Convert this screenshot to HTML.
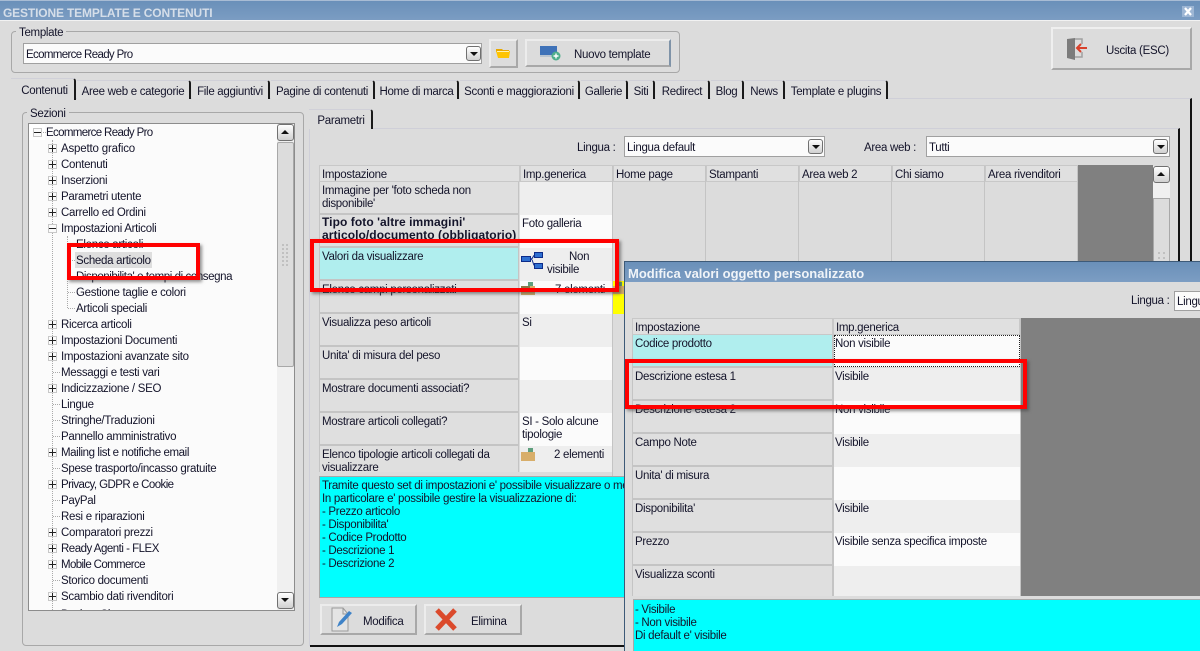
<!DOCTYPE html>
<html><head><meta charset="utf-8">
<style>
html,body{margin:0;padding:0}
body{width:1200px;height:651px;overflow:hidden;position:relative;background:#dcdcdc;font:11.5px/14px "Liberation Sans",sans-serif;color:#14142a;letter-spacing:-.3px}
div,svg,span.t{position:absolute}
.t{white-space:nowrap;line-height:16px}
.b{box-sizing:border-box}
.tab{box-sizing:border-box;top:80px;height:19px;background:#dedede;border-top:1px solid #d0d0d8;border-right:2px solid #1a1a1a;text-align:center;line-height:22px;white-space:nowrap;border-top-right-radius:3px}
.cb{box-sizing:border-box;background:#fbfbfb;border:1px solid #a0a0a0;padding-left:2px;line-height:23px}
.arr{box-sizing:border-box;width:15px;height:15px;border:1px solid #707070;border-radius:3px;background:linear-gradient(#fff,#d0d0d0)}
.arr:after{content:"";position:absolute;left:3px;top:5px;border-left:4px solid transparent;border-right:4px solid transparent;border-top:4px solid #111}
.up:after{border-top:0;border-bottom:4px solid #111}
.btn{box-sizing:border-box;background:#dcdcdc;border:2px solid;border-color:#ececec #a8a8a8 #a8a8a8 #ececec}
.ex{box-sizing:border-box;left:48px;width:9px;height:9px;background:#fbfbfb;border:1px solid #c8c8c8}
.ex:before{content:"";position:absolute;left:0;top:3px;width:7px;height:1px;background:#222}
.ex:after{content:"";position:absolute;left:3px;top:0;width:1px;height:7px;background:#222}
.mi:after{display:none}
.hd{background:#e0e0e0;border:1px solid #c8c8c8;box-sizing:border-box;padding-left:2px;line-height:19px;height:17px;top:165px}
.c1{left:319px;width:200px;background:#dfdfdf;box-sizing:border-box;border:1px solid #c4c4c4;border-width:0 1px 2px 1px;padding:3px 2px 0;line-height:13px;overflow:hidden}
.c2{left:520px;width:92px;box-sizing:border-box;padding:3px 2px 0;line-height:13px;overflow:hidden}
.vl{top:166px;width:1px;height:95px;background:#c4c4c4}
.red{box-sizing:border-box;border:4px solid #f00;box-shadow:2px 2px 3px rgba(60,60,60,.55)}
.p1{left:633px;width:199px;background:#dfdfdf;box-sizing:border-box;border-bottom:2px solid #c4c4c4;padding:3px 2px 0;line-height:13px;height:33px}
.p2{left:834px;width:186px;box-sizing:border-box;padding:3px 1px 0;line-height:13px;height:33px}
</style></head><body>

<!-- title bar -->
<div style="left:0;top:0;width:1200px;height:21px;background:linear-gradient(#6a90b9,#7c9dc3);border-top:1px solid #a8bcd4;box-sizing:border-box"></div>
<div style="left:0;top:20px;width:1200px;height:1px;background:#f2f2f2"></div>
<span class="t" style="left:3px;top:5px;font-weight:bold;font-size:12px;color:#d5dee9;letter-spacing:-.15px">GESTIONE TEMPLATE E CONTENUTI</span>
<div style="left:1182px;top:6px;width:12px;height:11px;background:#9db6d4"></div>
<svg style="left:1182px;top:6px" width="12" height="11"><path d="M3 2L9 9M9 2L3 9" stroke="#fff" stroke-width="2.2"/></svg>

<!-- Template group -->
<div class="b" style="left:11px;top:31px;width:669px;height:42px;border:1px solid #a8a8a8;border-radius:4px"></div>
<span class="t" style="left:16px;top:25px;background:#dcdcdc;padding:0 3px">Template</span>
<div class="cb" style="left:23px;top:43px;width:459px;height:21px;letter-spacing:-.65px">Ecommerce Ready Pro</div>
<div class="arr" style="left:466px;top:46px"></div>
<div class="btn" style="left:489px;top:39px;width:29px;height:29px"></div>
<svg style="left:495px;top:46px" width="16" height="14"><path d="M1 3h6l1 1h6v2H1z" fill="#e8a800"/><path d="M1 5h14l-1 7H3z" fill="#ffc400"/><path d="M2 5h12v1H2z" fill="#fff3b0"/></svg>
<div class="btn" style="left:525px;top:39px;width:146px;height:28px;border-right-color:#7f93a8"></div>
<svg style="left:539px;top:44px" width="22" height="18"><rect x="1" y="2" width="17" height="9" fill="#3f72b8"/><rect x="1" y="11" width="17" height="2" fill="#b9c4d0"/><circle cx="17" cy="12" r="4.5" fill="#4fae8c"/><path d="M17 9.5v5M14.5 12h5" stroke="#fff" stroke-width="1.4"/></svg>
<span class="t" style="left:574px;top:47px">Nuovo template</span>

<div class="btn" style="left:1051px;top:27px;width:141px;height:43px;border-color:#efefef #a8a8a8 #a8a8a8 #efefef"></div>
<svg style="left:1065px;top:36px" width="24" height="24"><path d="M2 3l8-1v22l-8-2z" fill="#7c7c7c"/><path d="M10 3h7v5M10 21h7v-5" fill="none" stroke="#a0a0a0" stroke-width="1.5"/><path d="M12 12h10M16 8l-4 4 4 4" fill="none" stroke="#d8412c" stroke-width="2"/></svg>
<span class="t" style="left:1106px;top:43px">Uscita (ESC)</span>

<!-- tabs -->
<div class="b" style="left:11px;top:98px;width:1181px;height:553px;border-top:1px solid #cfcfd8;border-right:2px solid #111"></div>
<div class="tab" style="left:11px;top:78px;width:65px;height:22px;background:#dcdcdc;border-bottom:0;line-height:25px;padding-left:4px">Contenuti</div>
<div class="tab" style="left:77px;width:114px">Aree web e categorie</div>
<div class="tab" style="left:192px;width:78px">File aggiuntivi</div>
<div class="tab" style="left:271px;width:104px">Pagine di contenuti</div>
<div class="tab" style="left:376px;width:83px">Home di marca</div>
<div class="tab" style="left:460px;width:120px">Sconti e maggiorazioni</div>
<div class="tab" style="left:581px;width:47px">Gallerie</div>
<div class="tab" style="left:629px;width:26px">Siti</div>
<div class="tab" style="left:656px;width:54px">Redirect</div>
<div class="tab" style="left:711px;width:33px">Blog</div>
<div class="tab" style="left:745px;width:40px">News</div>
<div class="tab" style="left:786px;width:102px">Template e plugins</div>

<!-- Sezioni -->
<div class="b" style="left:22px;top:112px;width:282px;height:534px;border:1px solid #a8a8a8;border-radius:4px"></div>
<span class="t" style="left:27px;top:106px;background:#dcdcdc;padding:0 3px">Sezioni</span>
<div class="b" style="left:28px;top:123px;width:267px;height:488px;border:1px solid #8c8c8c;background:#fbfbfb"></div>
<div style="left:29px;top:124px;width:16px;height:16px;background:#fff"></div>

<!-- tree dotted lines -->
<div style="left:52px;top:140px;width:0;height:470px;border-left:1px dotted #aaa"></div>
<div style="left:67px;top:236px;width:0;height:72px;border-left:1px dotted #aaa"></div>
<div style="left:41px;top:132px;width:5px;border-top:1px dotted #aaa"></div>
<div style="left:68px;top:244px;width:7px;border-top:1px dotted #aaa"></div>
<div style="left:68px;top:260px;width:7px;border-top:1px dotted #aaa"></div>
<div style="left:68px;top:276px;width:7px;border-top:1px dotted #aaa"></div>
<div style="left:68px;top:292px;width:7px;border-top:1px dotted #aaa"></div>
<div style="left:68px;top:308px;width:7px;border-top:1px dotted #aaa"></div>
<div style="left:53px;top:372px;width:7px;border-top:1px dotted #aaa"></div>
<div style="left:53px;top:404px;width:7px;border-top:1px dotted #aaa"></div>
<div style="left:53px;top:420px;width:7px;border-top:1px dotted #aaa"></div>
<div style="left:53px;top:436px;width:7px;border-top:1px dotted #aaa"></div>
<div style="left:53px;top:468px;width:7px;border-top:1px dotted #aaa"></div>
<div style="left:53px;top:500px;width:7px;border-top:1px dotted #aaa"></div>
<div style="left:53px;top:516px;width:7px;border-top:1px dotted #aaa"></div>
<div style="left:53px;top:580px;width:7px;border-top:1px dotted #aaa"></div>

<div class="ex mi" style="left:33px;top:128px"></div>
<div class="ex" style="top:144px"></div><div class="ex" style="top:160px"></div><div class="ex" style="top:176px"></div><div class="ex" style="top:192px"></div><div class="ex" style="top:208px"></div>
<div class="ex mi" style="top:224px"></div>
<div class="ex" style="top:320px"></div><div class="ex" style="top:336px"></div><div class="ex" style="top:352px"></div>
<div class="ex" style="top:384px"></div><div class="ex" style="top:448px"></div><div class="ex" style="top:480px"></div><div class="ex" style="top:528px"></div><div class="ex" style="top:544px"></div><div class="ex" style="top:560px"></div><div class="ex" style="top:592px"></div>

<div style="left:75px;top:252px;width:77px;height:16px;background:#dedede"></div>

<span class="t" style="left:46px;top:125px;letter-spacing:-.65px">Ecommerce Ready Pro</span>
<span class="t" style="left:61px;top:141px;letter-spacing:-.18px">Aspetto grafico</span>
<span class="t" style="left:61px;top:157px">Contenuti</span>
<span class="t" style="left:61px;top:173px">Inserzioni</span>
<span class="t" style="left:61px;top:189px">Parametri utente</span>
<span class="t" style="left:61px;top:205px">Carrello ed Ordini</span>
<span class="t" style="left:61px;top:221px">Impostazioni Articoli</span>
<span class="t" style="left:76px;top:237px">Elenco articoli</span>
<span class="t" style="left:76px;top:253px">Scheda articolo</span>
<span class="t" style="left:76px;top:269px;letter-spacing:-.42px">Disponibilita' e tempi di consegna</span>
<span class="t" style="left:76px;top:285px">Gestione taglie e colori</span>
<span class="t" style="left:76px;top:301px">Articoli speciali</span>
<span class="t" style="left:61px;top:317px">Ricerca articoli</span>
<span class="t" style="left:61px;top:333px">Impostazioni Documenti</span>
<span class="t" style="left:61px;top:349px">Impostazioni avanzate sito</span>
<span class="t" style="left:61px;top:365px">Messaggi e testi vari</span>
<span class="t" style="left:61px;top:381px">Indicizzazione / SEO</span>
<span class="t" style="left:61px;top:397px">Lingue</span>
<span class="t" style="left:61px;top:413px">Stringhe/Traduzioni</span>
<span class="t" style="left:61px;top:429px">Pannello amministrativo</span>
<span class="t" style="left:61px;top:445px;letter-spacing:-.4px">Mailing list e notifiche email</span>
<span class="t" style="left:61px;top:461px">Spese trasporto/incasso gratuite</span>
<span class="t" style="left:61px;top:477px;letter-spacing:-.57px">Privacy, GDPR e Cookie</span>
<span class="t" style="left:61px;top:493px">PayPal</span>
<span class="t" style="left:61px;top:509px">Resi e riparazioni</span>
<span class="t" style="left:61px;top:525px">Comparatori prezzi</span>
<span class="t" style="left:61px;top:541px;letter-spacing:-.5px">Ready Agenti - FLEX</span>
<span class="t" style="left:61px;top:557px;letter-spacing:-.63px">Mobile Commerce</span>
<span class="t" style="left:61px;top:573px">Storico documenti</span>
<span class="t" style="left:61px;top:589px">Scambio dati rivenditori</span>
<div style="left:61px;top:605px;width:200px;height:5px;overflow:hidden"><span class="t" style="left:0;top:2px">Backup Sito</span></div>
<div class="b" style="left:28px;top:610px;width:267px;height:1px;background:#8c8c8c"></div>

<div style="left:277px;top:124px;width:17px;height:486px;background:#f0f0f0"></div>
<div class="arr up" style="left:277px;top:124px;width:17px;height:17px"></div>
<div class="b" style="left:277px;top:142px;width:17px;height:225px;background:#dcdcdc;border:1px solid #a8a8a8;border-radius:2px"></div>
<svg style="left:281px;top:243px" width="9" height="23"><path d="M1 1h2v2H1zM5 1h2v2H5zM1 5h2v2H1zM5 5h2v2H5zM1 9h2v2H1zM5 9h2v2H5zM1 13h2v2H1zM5 13h2v2H5zM1 17h2v2H1zM5 17h2v2H5zM1 21h2v2H1zM5 21h2v2H5z" fill="#c0c0c0"/></svg>
<div class="arr" style="left:277px;top:592px;width:17px;height:17px"></div>

<!-- Parametri panel -->
<div class="b" style="left:309px;top:128px;width:871px;height:518px;border-top:1px solid #cfcfd8;border-right:2px solid #111;border-left:1px solid #cfcfd8"></div>
<div class="tab" style="left:309px;top:109px;width:64px;height:20px;background:#dcdcdc;line-height:23px;border-bottom:0;padding-left:2px">Parametri</div>
<div style="left:310px;top:645px;width:315px;height:2px;background:#111"></div>

<span class="t" style="left:577px;top:140px">Lingua :</span>
<div class="cb" style="left:624px;top:136px;width:201px;height:21px">Lingua default</div>
<div class="arr" style="left:808px;top:139px"></div>
<span class="t" style="left:864px;top:140px">Area web :</span>
<div class="cb" style="left:926px;top:136px;width:244px;height:21px">Tutti</div>
<div class="arr" style="left:1153px;top:139px"></div>

<!-- Main table -->
<div style="left:1078px;top:165px;width:75px;height:96px;background:#808080"></div>
<div class="hd" style="left:319px;width:201px">Impostazione</div>
<div class="hd" style="left:520px;width:93px">Imp.generica</div>
<div class="hd" style="left:613px;width:93px">Home page</div>
<div class="hd" style="left:706px;width:93px">Stampanti</div>
<div class="hd" style="left:799px;width:93px">Area web 2</div>
<div class="hd" style="left:892px;width:93px">Chi siamo</div>
<div class="hd" style="left:985px;width:93px">Area rivenditori</div>
<div class="vl" style="left:612px;height:320px"></div>
<div class="vl" style="left:705px"></div><div class="vl" style="left:798px"></div><div class="vl" style="left:891px"></div><div class="vl" style="left:984px"></div><div class="vl" style="left:1077px"></div>

<div class="c1" style="top:182px;height:33px">Immagine per 'foto scheda non disponibile'</div>
<div class="c2" style="top:182px;height:33px;background:#eee"></div>
<div class="c1" style="top:215px;height:33px;font-weight:bold;font-size:12px;letter-spacing:.07px;padding-top:1px;white-space:nowrap">Tipo foto 'altre immagini'<br>articolo/documento (obbligatorio)</div>
<div class="c2" style="top:215px;height:33px;background:#fbfbfb">Foto galleria</div>
<div class="c1" style="top:248px;height:33px;background:#b0eeee">Valori da visualizzare</div>
<div class="c2" style="top:248px;height:33px;background:#eee"></div>
<span class="t" style="left:569px;top:249px">Non</span>
<span class="t" style="left:547px;top:262px">visibile</span>
<svg style="left:520px;top:251px" width="25" height="19"><path d="M11 8c2 0 2-4 4-4M11 8c2 0 2 7 4 7" stroke="#0c2b8a" stroke-width="1" fill="none"/><rect x="1.500" y="5.500" width="9" height="5" fill="#2f6fd0" stroke="#0c2b8a"/><rect x="14.500" y="1.500" width="8" height="5" fill="#2f6fd0" stroke="#0c2b8a"/><rect x="14.500" y="12.500" width="8" height="5" fill="#2f6fd0" stroke="#0c2b8a"/></svg>
<div class="c1" style="top:281px;height:33px">Elenco campi personalizzati</div>
<div class="c2" style="top:281px;height:33px;background:#fbfbfb"><span class="t" style="left:35px;top:1px">7 elementi</span></div>
<svg style="left:521px;top:282px" width="15" height="13"><path d="M0 4h14v9H0z" fill="#d8ae6a"/><path d="M0 4h9v2H0z" fill="#8c7a4a"/><path d="M7 0h5v4H7z" fill="#5f9f7d"/></svg>
<div style="left:613px;top:281px;width:12px;height:33px;background:#ff0"></div>
<svg style="left:613px;top:282px" width="12" height="12"><path d="M0 4h12v8H0z" fill="#d8ae6a"/><path d="M4 0h5v4H4z" fill="#5f9f7d"/></svg>
<div class="c1" style="top:314px;height:33px">Visualizza peso articoli</div>
<div class="c2" style="top:314px;height:33px;background:#eee">Si</div>
<div class="c1" style="top:347px;height:33px">Unita' di misura del peso</div>
<div class="c2" style="top:347px;height:33px;background:#fbfbfb"></div>
<div class="c1" style="top:380px;height:33px">Mostrare documenti associati?</div>
<div class="c2" style="top:380px;height:33px;background:#eee"></div>
<div class="c1" style="top:413px;height:33px">Mostrare articoli collegati?</div>
<div class="c2" style="top:413px;height:33px;background:#fbfbfb">SI - Solo alcune tipologie</div>
<div class="c1" style="top:446px;height:26px;border-bottom:0">Elenco tipologie articoli collegati da visualizzare</div>
<div class="c2" style="top:446px;height:26px;background:#eee"><span class="t" style="left:34px;top:1px">2 elementi</span></div>
<svg style="left:521px;top:447px" width="15" height="14"><path d="M0 5h14v9H0z" fill="#d8ae6a"/><path d="M7 1h5v4H7z" fill="#5f9f7d"/></svg>
<div style="left:612px;top:281px;width:1px;height:191px;background:#c4c4c4"></div>

<!-- main scrollbar -->
<div style="left:1153px;top:166px;width:17px;height:95px;background:#f0f0f0"></div>
<div class="arr up" style="left:1153px;top:166px;width:17px;height:17px"></div>
<div class="b" style="left:1153px;top:198px;width:17px;height:64px;background:#dcdcdc;border:1px solid #a8a8a8"></div>
<svg style="left:1158px;top:252px" width="8" height="9"><path d="M0 0h2v2H0zM5 0h2v2H5zM0 5h2v2H0zM5 5h2v2H5z" fill="#c0c0c0"/></svg>

<!-- help box -->
<div class="b" style="left:319px;top:476px;width:306px;height:122px;background:#0ff;border:1px solid #a8a8a8;overflow:hidden;padding:3px 2px;line-height:13px;white-space:nowrap">Tramite questo set di impostazioni e' possibile visualizzare o mettere<br>In particolare e' possibile gestire la visualizzazione di:<br>- Prezzo articolo<br>- Disponibilita'<br>- Codice Prodotto<br>- Descrizione 1<br>- Descrizione 2</div>

<!-- buttons -->
<div class="btn" style="left:320px;top:604px;width:97px;height:31px"></div>
<svg style="left:329px;top:606px" width="26" height="27"><path d="M3 2h11l5 6v17H3z" fill="#e4e4e4" stroke="#9a9a9a"/><path d="M14 2v6h5" fill="none" stroke="#9a9a9a"/><path d="M8 21l2-5L20 5l3 2-10 11z" fill="#3f83c8"/></svg>
<span class="t" style="left:363px;top:614px">Modifica</span>
<div class="btn" style="left:424px;top:604px;width:98px;height:31px"></div>
<svg style="left:434px;top:607px" width="24" height="25"><path d="M3 3l18 19M21 3L3 22" stroke="#db4a2c" stroke-width="5"/></svg>
<span class="t" style="left:471px;top:614px">Elimina</span>

<!-- Red A, B under popup -->
<div class="red" style="left:67px;top:243px;width:133px;height:37px"></div>
<div class="red" style="left:310px;top:239px;width:309px;height:53px"></div>

<!-- Popup -->
<div style="left:624px;top:261px;width:576px;height:390px;background:#dcdcdc;border-left:1px solid #3d5a78;box-sizing:border-box"></div>
<div style="left:624px;top:261px;width:576px;height:1px;background:#3d5a78"></div>
<div style="left:625px;top:262px;width:575px;height:20px;background:linear-gradient(#6a90b9,#7c9dc3)"></div>
<span class="t" style="left:628px;top:266px;font-weight:bold;font-size:13px;color:#f0f4f8;letter-spacing:0">Modifica valori oggetto personalizzato</span>
<span class="t" style="left:1131px;top:293px">Lingua :</span>
<div class="cb" style="left:1174px;top:291px;width:40px;height:20px;line-height:21px">Lingua</div>

<div style="left:1021px;top:318px;width:179px;height:278px;background:#808080"></div>
<div class="hd" style="left:632px;width:201px;top:318px">Impostazione</div>
<div class="hd" style="left:833px;width:187px;top:318px">Imp.generica</div>
<div style="left:832px;top:335px;width:2px;height:261px;background:#c4c4c4"></div>
<div style="left:632px;top:335px;width:1px;height:261px;background:#c4c4c4"></div>
<div style="left:1020px;top:318px;width:1px;height:278px;background:#c4c4c4"></div>

<div class="p1" style="top:335px;background:#b0eeee">Codice prodotto</div>
<div class="p2" style="top:335px;background:#fbfbfb;outline:1px dotted #222;outline-offset:-1px;height:32px">Non visibile</div>
<div class="p1" style="top:368px">Descrizione estesa 1</div>
<div class="p2" style="top:368px;background:#eee">Visibile</div>
<div class="p1" style="top:401px">Descrizione estesa 2</div>
<div class="p2" style="top:401px;background:#fbfbfb">Non visibile</div>
<div class="p1" style="top:434px">Campo Note</div>
<div class="p2" style="top:434px;background:#eee">Visibile</div>
<div class="p1" style="top:467px">Unita' di misura</div>
<div class="p2" style="top:467px;background:#fbfbfb"></div>
<div class="p1" style="top:500px">Disponibilita'</div>
<div class="p2" style="top:500px;background:#eee">Visibile</div>
<div class="p1" style="top:533px">Prezzo</div>
<div class="p2" style="top:533px;background:#fbfbfb">Visibile senza specifica imposte</div>
<div class="p1" style="top:566px;height:30px;border-bottom:0">Visualizza sconti</div>
<div class="p2" style="top:566px;height:30px;background:#eee"></div>

<div class="b" style="left:633px;top:599px;width:567px;height:52px;background:#0ff;border-top:1px solid #a8a8a8;border-left:1px solid #a8a8a8;padding:4px 1px;line-height:13px">- Visibile<br>- Non visibile<br>Di default e' visibile</div>

<div class="red" style="left:625px;top:359px;width:402px;height:50px"></div>
</body></html>
